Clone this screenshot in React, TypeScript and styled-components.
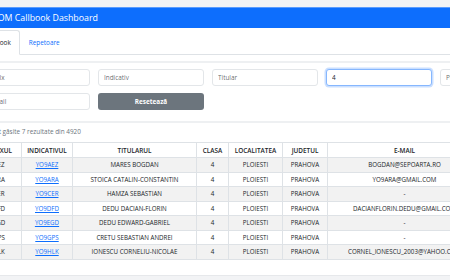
import React from "react";
import styled, { createGlobalStyle } from "styled-components";

const GlobalStyle = createGlobalStyle`
  html, body { margin: 0; padding: 0; overflow: hidden; background: #f2f3f5; }
  body { font-family: "Open Sans", "Noto Sans", sans-serif; color: #212529; }
  * { box-sizing: border-box; }
`;

const Page = styled.div`
  padding-top: 7px;
  width: 450px;
  overflow: hidden;
`;

const Shift = styled.div`
  margin-left: -24px;
  width: 640px;
`;

const Navbar = styled.div`
  height: 21px;
  background: #0d6efd;
  border-top: 1px solid #5a9bfd;
  display: flex;
  align-items: center;
  padding-left: 4px;
  color: #fff;
  font-size: 8.8px;
  white-space: nowrap;
`;

const Main = styled.div`
  background: #fff;
  padding-bottom: 15px;
  border-bottom: 1px solid #e6e8eb;
`;

const Tabs = styled.div`
  display: flex;
  padding-top: 2px;
  border-bottom: 1px solid #dee2e6;
  height: 27px;
  align-items: flex-end;
`;

const Tab = styled.div<{ $active?: boolean }>`
  height: 25px;
  margin-bottom: -1px;
  padding: 0 8px;
  display: flex;
  align-items: center;
  font-size: 6.4px;
  color: ${(p) => (p.$active ? "#212529" : "#0d6efd")};
  background: ${(p) => (p.$active ? "#fff" : "transparent")};
  border: 1px solid ${(p) => (p.$active ? "#dee2e6" : "transparent")};
  border-bottom-color: ${(p) => (p.$active ? "#fff" : "transparent")};
  border-radius: 3px 3px 0 0;
`;

const Divider = styled.div<{ $top: number }>`
  height: 2px;
  background: #eef0f2;
  margin-top: ${(p) => p.$top}px;
`;

const Filters = styled.div`
  display: grid;
  grid-template-columns: repeat(5, 106px);
  grid-auto-rows: 17px;
  column-gap: 8px;
  row-gap: 7px;
  padding-left: 8px;
  margin-top: 6px;
`;

const Input = styled.input<{ $focused?: boolean }>`
  width: 100%;
  height: 17px;
  padding: 0 5px;
  font-family: inherit;
  font-size: 6.4px;
  color: #212529;
  background: #fff;
  border: 1px solid ${(p) => (p.$focused ? "#86b7fe" : "#e3e6e9")};
  border-radius: 3px;
  outline: none;
  box-shadow: ${(p) => (p.$focused ? "0 0 0 1.5px rgba(13,110,253,0.22)" : "none")};
  &::placeholder { color: rgba(33, 37, 41, 0.7); }
`;

const ResetButton = styled.button`
  height: 17px;
  border: none;
  border-radius: 3px;
  background: #6c757d;
  color: #fff;
  font-family: inherit;
  font-size: 6.4px;
  font-weight: 700;
  padding: 0;
`;

const ResultText = styled.div`
  margin-top: 4px;
  padding-left: 4px;
  height: 10px;
  line-height: 10px;
  font-size: 6.4px;
  color: #6c757d;
`;

const Table = styled.table`
  margin-top: 5px;
  border-collapse: collapse;
  table-layout: fixed;
  width: 505px;
  font-size: 6.2px;
`;

const Th = styled.th`
  height: 15px;
  padding: 0 3px;
  border: 1px solid #dee2e6;
  font-weight: 600;
  font-size: 6.4px;
  text-align: center;
  white-space: nowrap;
  overflow: hidden;
  background: #fff;
`;

const Row = styled.tr<{ $striped: boolean }>`
  height: 14.5px;
  background: ${(p) => (p.$striped ? "#f2f2f2" : "#fff")};
`;

const Td = styled.td`
  padding: 0 3px;
  border: 1px solid #dee2e6;
  text-align: center;
  white-space: nowrap;
  overflow: hidden;
  color: #212529;
`;

const CallLink = styled.a`
  color: #0d6efd;
  text-decoration: underline;
`;

const cols = [45, 51, 124, 32, 54, 45, 154];
const headers = ["SUFIXUL", "INDICATIVUL", "TITULARUL", "CLASA", "LOCALITATEA", "JUDETUL", "E-MAIL"];

const rows = [
  ["AEZ", "YO9AEZ", "MARES BOGDAN", "BOGDAN@SEPOARTA.RO"],
  ["ARA", "YO9ARA", "STOICA CATALIN-CONSTANTIN", "YO9ARA@GMAIL.COM"],
  ["CER", "YO9CER", "HAMZA SEBASTIAN", "-"],
  ["DFD", "YO9DFD", "DEDU DACIAN-FLORIN", "DACIANFLORIN.DEDU@GMAIL.COM"],
  ["EGD", "YO9EGD", "DEDU EDWARD-GABRIEL", "-"],
  ["GPS", "YO9GPS", "CRETU SEBASTIAN ANDREI", "-"],
  ["HLK", "YO9HLK", "IONESCU CORNELIU-NICOLAE", "CORNEL_IONESCU_2003@YAHOO.COM"],
];

export default function App() {
  return (
    <>
      <GlobalStyle />
      <Page>
        <Shift>
          <Navbar>ANCOM Callbook Dashboard</Navbar>
          <Main>
            <Tabs>
              <Tab $active>Callbook</Tab>
              <Tab>Repetoare</Tab>
            </Tabs>
            <Divider $top={6} />
            <Filters>
              <Input placeholder="Sufix" />
              <Input placeholder="Indicativ" />
              <Input placeholder="Titular" />
              <Input $focused defaultValue="4" autoFocus />
              <Input placeholder="Ploiești" />
              <Input placeholder="Email" />
              <ResetButton>Resetează</ResetButton>
            </Filters>
            <Divider $top={11} />
            <ResultText>Au fost găsite 7 rezultate din 4920</ResultText>
            <Table>
              <colgroup>
                {cols.map((w, i) => (
                  <col key={i} style={{ width: w }} />
                ))}
              </colgroup>
              <thead>
                <tr>
                  {headers.map((h) => (
                    <Th key={h}>{h}</Th>
                  ))}
                </tr>
              </thead>
              <tbody>
                {rows.map((r, i) => (
                  <Row key={r[1]} $striped={i % 2 === 0}>
                    <Td>{r[0]}</Td>
                    <Td>
                      <CallLink href="#">{r[1]}</CallLink>
                    </Td>
                    <Td>{r[2]}</Td>
                    <Td>4</Td>
                    <Td>PLOIESTI</Td>
                    <Td>PRAHOVA</Td>
                    <Td>{r[3]}</Td>
                  </Row>
                ))}
              </tbody>
            </Table>
          </Main>
        </Shift>
      </Page>
    </>
  );
}
